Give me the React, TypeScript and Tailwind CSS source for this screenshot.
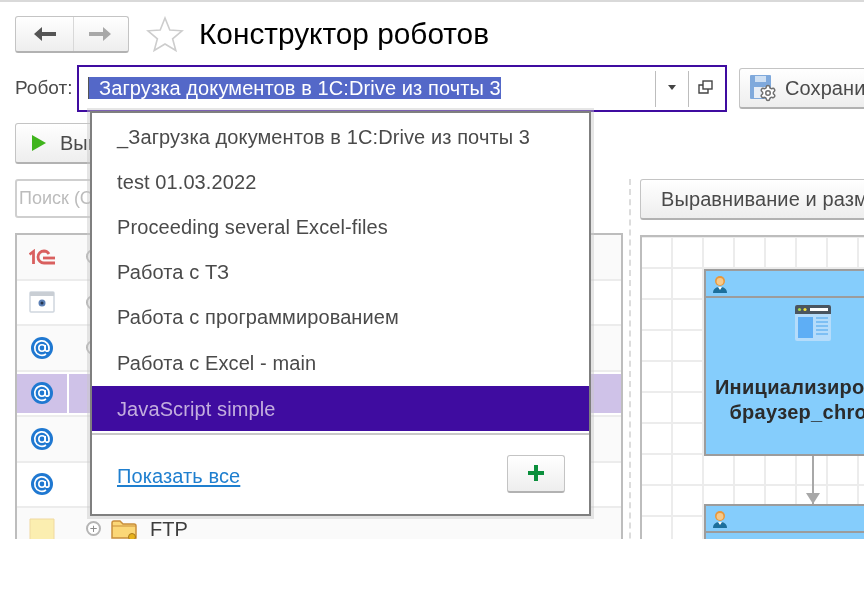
import React from 'react';
import { Settings } from 'lucide-react';

const items = [
  '_Загрузка документов в 1С:Drive из почты 3',
  'test 01.03.2022',
  'Proceeding several Excel-files',
  'Работа с ТЗ',
  'Работа с программированием',
  'Работа с Excel - main',
];

const OneCIcon = () => (
  <svg width="26" height="16" viewBox="0 0 26 16" fill="none" stroke="#d9605f" strokeWidth="2.8">
    <path d="M0.5 5.5 L4.5 2.5 V15" />
    <path d="M26 14 H15 A6 6 0 1 1 15 2 A6 6 0 0 1 20 5" />
    <path d="M14 9 H26" />
  </svg>
);

const EyeWindowIcon = () => (
  <svg width="26" height="22" viewBox="0 0 26 22">
    <rect x="1" y="1" width="24" height="20" rx="1" fill="#fff" stroke="#cfd6de" strokeWidth="1.5" />
    <rect x="1" y="1" width="24" height="4" fill="#c9ced4" />
    <circle cx="13" cy="12" r="3.5" fill="#5b7fb5" />
    <circle cx="13" cy="12" r="1.5" fill="#26364f" />
  </svg>
);

const MailIcon = () => (
  <svg width="24" height="24" viewBox="0 0 24 24" fill="none">
    <circle cx="12" cy="12" r="11" fill="#1f78d1" />
    <path d="M19 13 a7.2 7.2 0 1 0 -3 5" stroke="#fff" strokeWidth="1.7" />
    <circle cx="12" cy="12" r="3.2" stroke="#fff" strokeWidth="1.6" />
    <path d="M15.2 9 V13.5 a1.9 1.9 0 0 0 3.8 -0.5" stroke="#fff" strokeWidth="1.6" />
  </svg>
);

const SaveIcon = () => (
  <span className="relative block w-[26px] h-[26px] shrink-0">
    <svg width="22" height="24" viewBox="0 0 22 24" className="block">
      <rect x="0" y="0" width="21" height="24" rx="1" fill="#7fa9dc" />
      <rect x="5" y="1" width="11" height="6" fill="#cfe0f3" />
      <rect x="4" y="12" width="13" height="11" fill="#e8eef6" />
    </svg>
    <Settings size={18} strokeWidth={2} className="absolute -right-[1px] -bottom-[1px] text-[#707070] fill-white" />
  </span>
);

const PersonIcon = () => (
  <svg width="16" height="20" viewBox="0 0 16 20">
    <path d="M1 19 C1 14 5 13 8 13 C11 13 15 14 15 19 Z" fill="#1c6f9c" />
    <path d="M6 13 L8 16 L10 13 Z" fill="#fff" />
    <circle cx="8" cy="7" r="5" fill="#e8973a" />
    <circle cx="8" cy="7.5" r="3.4" fill="#f6c98a" />
  </svg>
);

const BrowserIcon = () => (
  <svg width="36" height="36" viewBox="0 0 36 36">
    <rect x="0" y="0" width="36" height="36" rx="2" fill="#b5dcfb" />
    <path d="M0 2 a2 2 0 0 1 2 -2 H34 a2 2 0 0 1 2 2 V9 H0 Z" fill="#4a5560" />
    <circle cx="4.5" cy="4.5" r="1.6" fill="#a6d94b" />
    <circle cx="10" cy="4.5" r="1.6" fill="#f4e13c" />
    <rect x="15" y="3" width="18" height="3" fill="#fff" />
    <rect x="3" y="12" width="15" height="21" fill="#5eaef5" />
    <path d="M21 13 H33 M21 17 H33 M21 21 H33 M21 25 H33 M21 29 H33" stroke="#6bb5f2" strokeWidth="1.5" />
  </svg>
);

const FolderIcon = () => (
  <svg width="26" height="22" viewBox="0 0 26 22">
    <path d="M1 5 a2 2 0 0 1 2 -2 H9 L12 6 H23 a2 2 0 0 1 2 2 V20 H1 Z" fill="#fbd777" stroke="#c98f3c" strokeWidth="1.5" />
    <path d="M1 8 H25" stroke="#c98f3c" strokeWidth="1" />
    <circle cx="21" cy="19" r="3.5" fill="#e7b21b" stroke="#a9791a" />
  </svg>
);

const PlusCircle = () => (
  <span className="w-[15px] h-[15px] rounded-full border-2 border-[#b5b5b5] flex items-center justify-center text-[#8a8a8a] text-[13px] leading-none bg-white">+</span>
);

const TreeRow = ({ icon, active, alt, children }: { icon: React.ReactNode; active?: boolean; alt?: boolean; children?: React.ReactNode }) => (
  <div className={`h-[45.5px] shrink-0 flex border-b-2 border-[#ececec] ${alt ? 'bg-[#fafafa]' : 'bg-white'} ${active ? 'py-[2px]' : ''}`}>
    <div className={`w-[50px] flex items-center justify-center ${active ? 'bg-[#cfc2e8]' : ''}`}>{icon}</div>
    <div className={`flex-1 ml-[2px] flex items-center gap-2 pl-[17px] ${active ? 'bg-[#cfc2e8]' : ''}`}>{children}</div>
  </div>
);

const Btn = ({ className, children }: { className?: string; children: React.ReactNode }) => (
  <div className={`flex items-center rounded-[3px] border border-[#c4c4c4] border-b-2 border-b-[#b2b2b2] bg-gradient-to-b from-white to-[#eeeeee] ${className ?? ''}`}>{children}</div>
);

export default function App() {
  return (
    <div className="w-[864px] h-[600px] bg-white overflow-hidden" style={{ fontFamily: '"Liberation Sans", Arial, sans-serif' }}>
      <div className="relative h-[539px] overflow-hidden border-t-2 border-[#d9d9d9] text-[#4a4a4a] blur-[0.35px]">
        {/* header */}
        <div className="flex items-center h-[38px] mt-[13px] ml-[15px]">
          <Btn className="w-[114px] h-[37px] shrink-0">
            <div className="w-[58px] h-full flex items-center justify-center border-r border-[#d8d8d8]">
              <svg width="22" height="14" viewBox="0 0 22 14"><path d="M0 7 L8 0 V5 H22 V9 H8 V14 Z" fill="#555" /></svg>
            </div>
            <div className="flex-1 flex items-center justify-center pr-[2px]">
              <svg width="22" height="14" viewBox="0 0 22 14"><path d="M22 7 L14 0 V5 H0 V9 H14 V14 Z" fill="#a8a8a8" /></svg>
            </div>
          </Btn>
          <svg width="38" height="36" viewBox="0 0 38 36" fill="#fff" stroke="#cdcdcd" strokeWidth="1.6" className="ml-[17px] shrink-0">
            <path d="M19 2 L23.8 14 L36 14.8 L26.6 22.8 L29.8 34.5 L19 28 L8.2 34.5 L11.4 22.8 L2 14.8 L14.2 14 Z" />
          </svg>
          <h1 className="ml-[15px] text-[29.8px] leading-none text-black whitespace-nowrap">Конструктор роботов</h1>
        </div>

        {/* robot field */}
        <div className="flex items-center mt-[12px] ml-[15px]">
          <span className="text-[19px] w-[62px] shrink-0">Робот:</span>
          <div className="w-[650px] h-[47px] shrink-0 border-2 border-[#3f0ca0] flex items-center pl-[9px] pr-[4px]">
            <div className="flex-1 text-[20px] tracking-[0.1px] leading-[25px] whitespace-nowrap">
              <span className="border-l border-[#555] bg-[#5468c8] text-white pl-[10px]">Загрузка документов в 1С:Drive из почты 3</span>
            </div>
            <div className="w-[33px] h-[36px] border-l border-[#bdbdbd] flex items-center justify-center">
              <span className="w-0 h-0 border-x-[4px] border-x-transparent border-t-[5px] border-t-[#444] -mt-[3px]" />
            </div>
            <div className="w-[33px] h-[36px] border-l border-[#bdbdbd] flex items-center justify-center">
              <svg width="15" height="14" viewBox="0 0 15 14" fill="none" stroke="#444" strokeWidth="1.4" className="-mt-[3px]">
                <rect x="5" y="1" width="9" height="8" />
                <path d="M5 5 H1 V13 H10 V9" />
              </svg>
            </div>
          </div>
          <Btn className="ml-[12px] w-[160px] h-[41px] gap-[9px] pl-[10px] shrink-0">
            <SaveIcon />
            <span className="text-[20px] tracking-[0.1px] whitespace-nowrap">Сохранить</span>
          </Btn>
        </div>

        {/* body */}
        <div className="flex ml-[15px] mt-[11px]">
          <div className="w-[608px] shrink-0">
            <Btn className="w-[120px] h-[41px] pl-[16px] gap-[14px]">
              <span className="w-0 h-0 border-y-[8px] border-y-transparent border-l-[14px] border-l-[#3fb41c]" />
              <span className="text-[20px]">Выполнить</span>
            </Btn>
            <div className="mt-[15px] w-[200px] h-[39px] border-2 border-[#cfcfcf] rounded-[3px] pl-[2px] flex items-center text-[18px] text-[#bcbcbc]">Поиск (Ctrl+F)</div>
            <div className="mt-[15px] h-[320px] border-2 border-[#bdbdbd] flex flex-col">
              <TreeRow icon={<OneCIcon />} alt><PlusCircle /></TreeRow>
              <TreeRow icon={<EyeWindowIcon />}><PlusCircle /></TreeRow>
              <TreeRow icon={<MailIcon />} alt><PlusCircle /></TreeRow>
              <TreeRow icon={<MailIcon />} active />
              <TreeRow icon={<MailIcon />} alt />
              <TreeRow icon={<MailIcon />} />
              <TreeRow icon={<svg width="26" height="24" viewBox="0 0 26 24"><path d="M1 1 H25 V23 H1 Z" fill="#fbeeb0" stroke="#f0d9a0" /></svg>} alt>
                <span className="-mt-[2px] flex items-center">
                  <PlusCircle />
                  <span className="ml-[10px]"><FolderIcon /></span>
                  <span className="ml-[13px] text-[20px] text-[#3d3d3d]">FTP</span>
                </span>
              </TreeRow>
            </div>
          </div>

          <div className="w-[17px] shrink-0 flex justify-start pl-[6px] mt-[56px]">
            <div className="w-0 h-[400px] border-l-2 border-dashed border-[#dcdcdc]" />
          </div>

          <div className="flex-1 min-w-0 mt-[56px]">
            <Btn className="w-[260px] h-[41px] pl-[20px]">
              <span className="text-[20px] tracking-[0.1px] whitespace-nowrap">Выравнивание и размеры</span>
            </Btn>
            <div className="mt-[15px] h-[320px] w-[300px] border-2 border-[#bdbdbd] bg-[length:31px_31px] bg-[linear-gradient(#ececec_2px,transparent_2px),linear-gradient(90deg,#ececec_2px,transparent_2px)] bg-[position:29px_30px] pt-[32px] pl-[62px]">
              <div className="w-[300px] h-[187px] border-2 border-[#9c9c9c] bg-[#85cdfc]">
                <div className="h-[27px] border-b-2 border-[#9c9c9c] pl-[6px] pt-[3px]"><PersonIcon /></div>
                <div className="flex flex-col items-center w-[214px] pt-[7px]">
                  <BrowserIcon />
                  <div className="mt-[34px] text-[20px] tracking-[0.3px] leading-[25px] font-bold text-[#2b2b2b] text-center whitespace-nowrap">Инициализировать<br />браузер_chrome</div>
                </div>
              </div>
              <div className="ml-[108px] w-0 h-[48px] border-l-2 border-[#a8a8a8]" />
              <div className="ml-[102px] -mt-[11px] w-0 h-0 border-x-[7px] border-x-transparent border-t-[11px] border-t-[#a8a8a8]" />
              <div className="w-[300px] h-[60px] border-2 border-[#9c9c9c] bg-[#85cdfc]">
                <div className="h-[27px] border-b-2 border-[#9c9c9c] pl-[6px] pt-[3px]"><PersonIcon /></div>
              </div>
            </div>
          </div>
        </div>

        {/* dropdown */}
        <div className="absolute left-[90px] top-[109px] w-[501px] h-[405px] border-2 border-[#7f7f7f] bg-white shadow-[0_0_0_3px_rgba(200,200,200,0.45)] flex flex-col text-[20px] tracking-[0.1px] text-[#4a4a4a]">
          <div className="pt-[1px]">
            {items.map(t => (
              <div key={t} className="h-[45.2px] flex items-center pl-[25px] whitespace-nowrap">{t}</div>
            ))}
            <div className="h-[45px] mt-[1px] flex items-center pl-[25px] bg-[#3f0ca0] text-[#c3aede]">JavaScript simple</div>
          </div>
          <div className="mt-[2px] border-t-2 border-[#c8c8c8] flex-1 flex items-center justify-between pl-[25px] pr-[24px]">
            <span className="text-[#1f7fcf] underline underline-offset-2 mt-[3px]">Показать все</span>
            <Btn className="w-[58px] h-[38px] justify-center mt-[-2px]">
              <svg width="16" height="16" viewBox="0 0 16 16"><path d="M6 0 H10 V6 H16 V10 H10 V16 H6 V10 H0 V6 H6 Z" fill="#0b8f3c" /></svg>
            </Btn>
          </div>
        </div>
      </div>
    </div>
  );
}
